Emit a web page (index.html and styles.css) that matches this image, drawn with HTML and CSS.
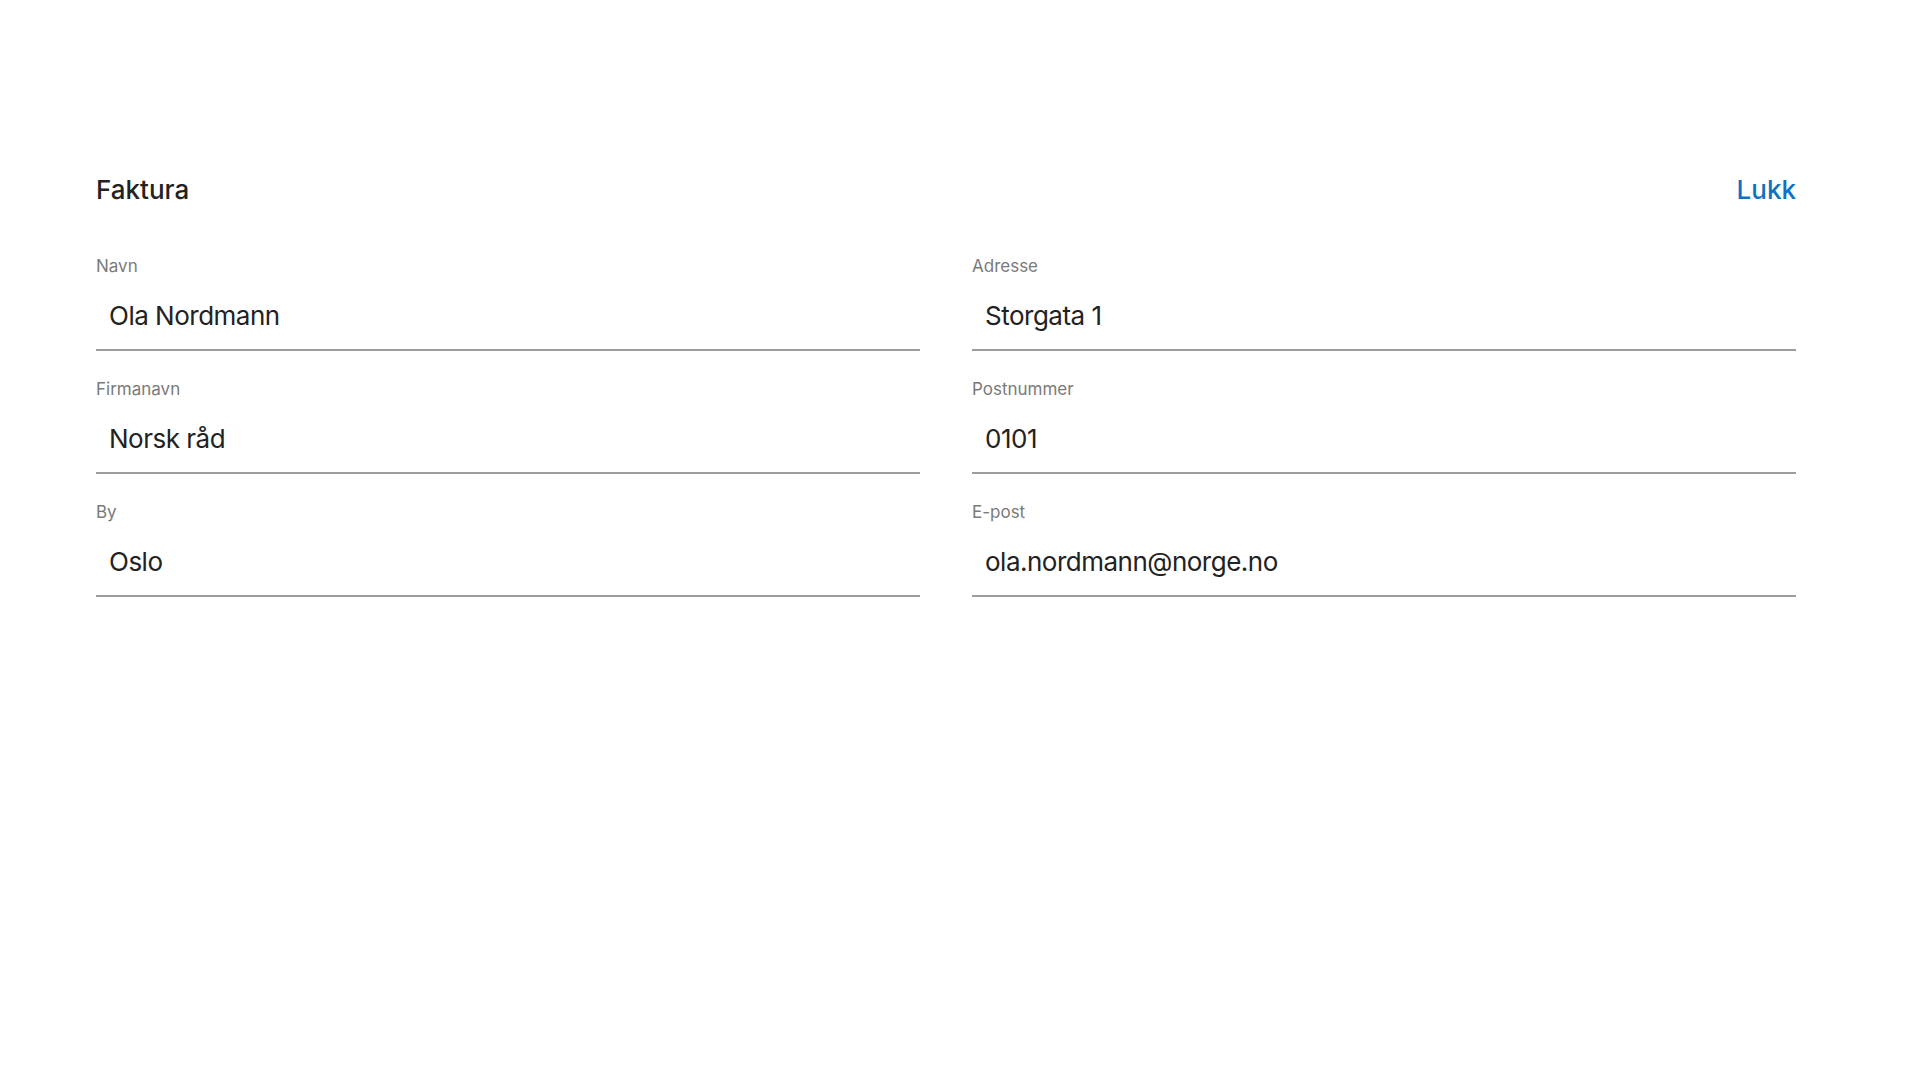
FILE: index.html
```html
<!DOCTYPE html>
<html lang="nb">
<head>
  <meta charset="UTF-8">
  <meta name="viewport" content="width=device-width, initial-scale=1.0">
  <title>Faktura</title>
  <link rel="stylesheet" href="styles.css">
</head>
<body>

<div class="page">
  <header class="top">
    <h1>Faktura</h1>
    <a href="#" class="close">Lukk</a>
  </header>

  <form class="fields">
    <div class="field">
      <label for="navn">Navn</label>
      <input type="text" id="navn" value="Ola Nordmann">
    </div>
    <div class="field">
      <label for="adresse">Adresse</label>
      <input type="text" id="adresse" value="Storgata 1">
    </div>
    <div class="field">
      <label for="firma">Firmanavn</label>
      <input type="text" id="firma" value="Norsk råd">
    </div>
    <div class="field">
      <label for="postnr">Postnummer</label>
      <input type="text" id="postnr" value="0101">
    </div>
    <div class="field">
      <label for="by">By</label>
      <input type="text" id="by" value="Oslo">
    </div>
    <div class="field">
      <label for="epost">E-post</label>
      <input type="email" id="epost" value="ola.nordmann@norge.no">
    </div>
  </form>
</div>

</body>
</html>
```

FILE: styles.css
```css
* { margin: 0; padding: 0; box-sizing: border-box; font-family: 'Inter', 'Noto Sans', sans-serif; }
body { background: #fff; color: #222; }
.page { padding: 174px 124px 0 96px; }
.top { display: flex; justify-content: space-between; align-items: center; }
.top h1 { font-size: 26px; line-height: 32px; font-weight: 500; color: #222; }
.close { font-size: 26px; line-height: 32px; font-weight: 500; color: #0b72c5; text-decoration: none; }
.fields { display: grid; grid-template-columns: 1fr 1fr; column-gap: 52px; row-gap: 28px; margin-top: 50px; }
.field label { display: block; font-size: 17px; line-height: 20px; color: #7a7a7a; margin-bottom: 6px; }
.field input { display: block; width: 100%; height: 69px; padding: 0 13px; border: none; border-bottom: 2px solid #9c9c9c; font-size: 26px; letter-spacing: -0.5px; color: #222; background: transparent; outline: none; }
```
